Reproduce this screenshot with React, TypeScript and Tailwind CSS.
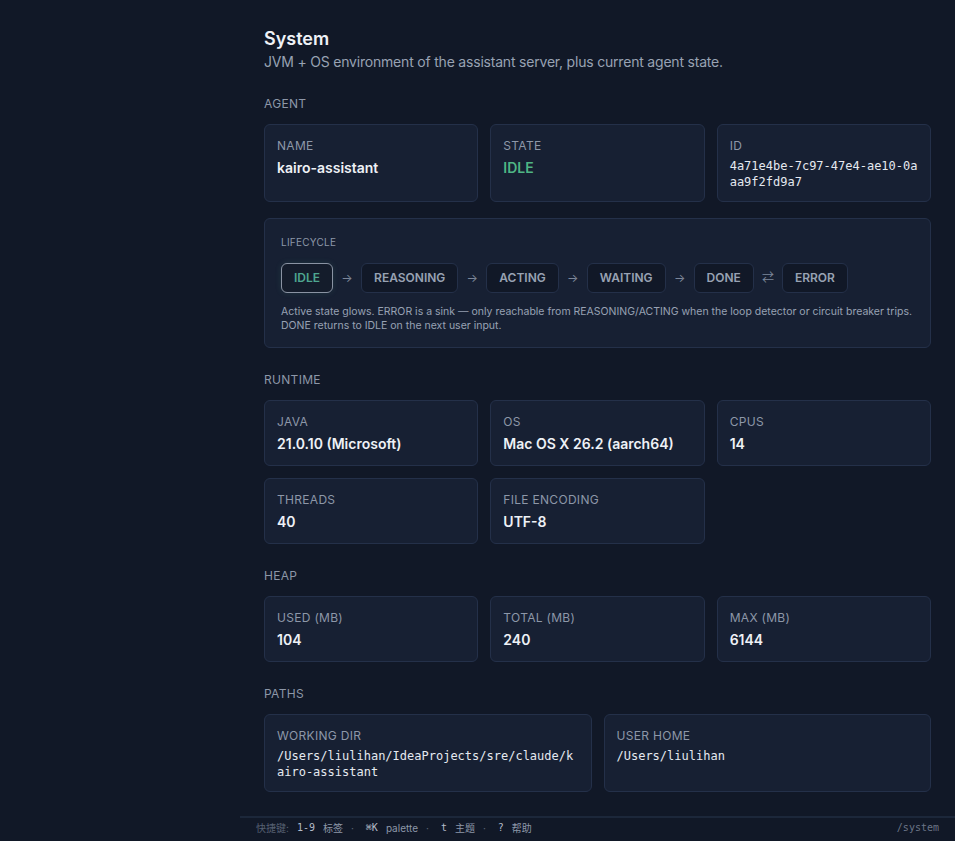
const sans = { fontFamily: "Inter, 'Noto Sans', 'Noto Sans CJK SC', sans-serif" };

type Field = { label: string; value: string; mono?: boolean; tone?: "ok" };

function InfoCard({ label, value, mono, tone }: Field) {
  return (
    <div className="rounded-md border border-[#243049] bg-[#172033] px-3 pt-[13px] pb-[11px]">
      <div className="text-xs leading-4 tracking-wide text-[#8d97a8]">{label}</div>
      <div
        className={
          mono
            ? "mt-1 break-all font-['DejaVu_Sans_Mono',monospace] text-xs leading-4 text-[#e5e9f0]"
            : tone === "ok"
              ? "mt-1 text-sm font-semibold leading-5 text-[#4fb585]"
              : "mt-1 text-sm font-semibold leading-5 text-[#eef1f6]"
        }
      >
        {value}
      </div>
    </div>
  );
}

function SectionTitle({ children }: { children: string }) {
  return <h2 className="mt-6 mb-3 text-xs leading-4 tracking-wide text-[#8d97a8]">{children}</h2>;
}

const states = ["IDLE", "REASONING", "ACTING", "WAITING", "DONE", "ERROR"];
const current = "IDLE";

function Lifecycle() {
  return (
    <div className="mt-4 rounded-md border border-[#243049] bg-[#172033] px-4 pt-4 pb-[14px]">
      <div className="text-[10px] leading-[14px] tracking-wide text-[#8d97a8]">LIFECYCLE</div>
      <div className="mt-[14px] flex items-center gap-2">
        {states.map((s, i) => (
          <div key={s} className="flex items-center gap-2">
            {i > 0 && (
              <span className="w-3 text-center text-xs text-[#7c8699]">{s === "ERROR" ? "⇄" : "→"}</span>
            )}
            <span
              className={
                s === current
                  ? "rounded-md border border-[#8a93a3] bg-[#141c2b] px-3 py-1.5 text-xs font-semibold leading-4 text-[#4ea690] shadow-[0_0_6px_rgba(78,166,144,0.15)]"
                  : "rounded-md border border-[#243049] bg-[#111827] px-3 py-1.5 text-xs font-semibold leading-4 text-[#98a2b3]"
              }
            >
              {s}
            </span>
          </div>
        ))}
      </div>
      <p className="mt-3 text-[10.5px] leading-[14px] text-[#98a2b3]">
        Active state glows. ERROR is a sink — only reachable from REASONING/ACTING when the loop detector or circuit
        breaker trips.
        <br />
        DONE returns to IDLE on the next user input.
      </p>
    </div>
  );
}

function Footer() {
  const key = "font-['DejaVu_Sans_Mono',monospace] text-[#b4bcc9]";
  const dot = "pr-1 text-[#5b6474]";
  const word = "text-[#8d97a8]";
  return (
    <footer className="flex h-[25px] shrink-0 items-center justify-between border-t-2 border-[#1c273a] px-4 pb-[3px] text-[10px] leading-[14px]">
      <div className="flex items-center gap-2">
        <span className="text-[#566072]">快捷键:</span>
        <span className={key}>1-9</span>
        <span className={word}>标签</span>
        <span className={dot}>·</span>
        <span className={key}>⌘K</span>
        <span className={word}>palette</span>
        <span className={dot}>·</span>
        <span className={key}>t</span>
        <span className={word}>主题</span>
        <span className={dot}>·</span>
        <span className={key}>?</span>
        <span className={word}>帮助</span>
      </div>
      <span className="font-['DejaVu_Sans_Mono',monospace] text-[#6b7486]">/system</span>
    </footer>
  );
}

export default function App() {
  return (
    <div className="flex h-screen overflow-hidden bg-[#111827]" style={sans}>
      <aside className="w-[240px] shrink-0" />
      <div className="flex min-w-0 flex-1 flex-col">
        <main className="flex-1 overflow-hidden px-6 pt-[26px]">
          <h1 className="text-lg font-semibold leading-[26px] text-[#eef1f6]">System</h1>
          <p className="text-sm leading-5 tracking-[-0.2px] text-[#98a2b3]">
            JVM + OS environment of the assistant server, plus current agent state.
          </p>

          <SectionTitle>AGENT</SectionTitle>
          <div className="grid grid-cols-3 gap-3">
            <InfoCard label="NAME" value="kairo-assistant" />
            <InfoCard label="STATE" value="IDLE" tone="ok" />
            <InfoCard label="ID" value="4a71e4be-7c97-47e4-ae10-0aaa9f2fd9a7" mono />
          </div>
          <Lifecycle />

          <SectionTitle>RUNTIME</SectionTitle>
          <div className="grid grid-cols-3 gap-3">
            <InfoCard label="JAVA" value="21.0.10 (Microsoft)" />
            <InfoCard label="OS" value="Mac OS X 26.2 (aarch64)" />
            <InfoCard label="CPUS" value="14" />
            <InfoCard label="THREADS" value="40" />
            <InfoCard label="FILE ENCODING" value="UTF-8" />
          </div>

          <SectionTitle>HEAP</SectionTitle>
          <div className="grid grid-cols-3 gap-3">
            <InfoCard label="USED (MB)" value="104" />
            <InfoCard label="TOTAL (MB)" value="240" />
            <InfoCard label="MAX (MB)" value="6144" />
          </div>

          <SectionTitle>PATHS</SectionTitle>
          <div className="grid grid-cols-2 gap-3">
            <InfoCard label="WORKING DIR" value="/Users/liulihan/IdeaProjects/sre/claude/kairo-assistant" mono />
            <InfoCard label="USER HOME" value="/Users/liulihan" mono />
          </div>
        </main>
        <Footer />
      </div>
    </div>
  );
}
